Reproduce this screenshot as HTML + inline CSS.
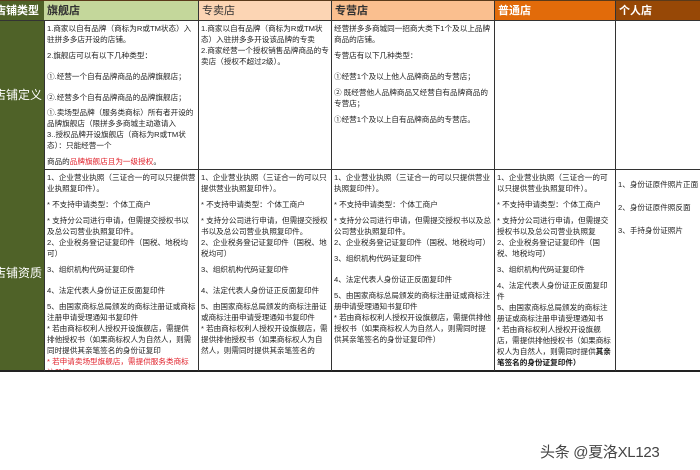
<!DOCTYPE html>
<html><head><meta charset="utf-8">
<style>
*{margin:0;padding:0;box-sizing:border-box}
body{width:700px;height:470px;background:#fff;position:relative;overflow:hidden;font-family:"Liberation Sans","Noto Sans CJK SC",sans-serif;color:#333}
.c{position:absolute;overflow:hidden}
.h{top:0;height:21px;font-size:11px;line-height:21px;padding-left:3px;border-top:1px solid #5a3a1a;border-bottom:1px solid #333}
.t{font-size:7.6px;line-height:11px;padding:2px 2px 0 2px;color:#222}
.t p{margin-bottom:5px}
.v{border-left:1px solid #333}
.red{color:#e0202a}
.b{font-weight:bold;color:#111}
</style></head><body>
<div class="c h" style="left:-8px;width:52px;background:#4f6228;color:#fff;font-weight:bold">店铺类型</div>
<div class="c h" style="left:44px;width:155px;background:#c4d79b;color:#333;font-weight:bold">旗舰店</div>
<div class="c h v" style="left:198px;width:134px;background:#fcd5b4;color:#333">专卖店</div>
<div class="c h v" style="left:331px;width:164px;background:#fabf8f;color:#333;font-weight:bold">专营店</div>
<div class="c h v" style="left:494px;width:122px;background:#e26b0a;color:#fff;font-weight:bold">普通店</div>
<div class="c h v" style="left:615px;width:85px;background:#974806;color:#fff;font-weight:bold">个人店</div>
<div class="c" style="left:0;top:21px;width:44px;height:350px;background:#4f6228"></div>
<div class="c" style="left:-6px;top:88px;width:60px;font-size:12px;color:#fff;line-height:14px">店铺定义</div>
<div class="c" style="left:-6px;top:266px;width:60px;font-size:12px;color:#fff;line-height:14px">店铺资质</div>
<div class="c" style="left:44px;top:169px;width:656px;height:1px;background:#333"></div>
<div class="c" style="left:0;top:370px;width:700px;height:2px;background:#222"></div>
<div class="c" style="left:44px;top:21px;width:1px;height:350px;background:#333"></div>
<div class="c" style="left:198px;top:21px;width:1px;height:350px;background:#333"></div>
<div class="c" style="left:331px;top:21px;width:1px;height:350px;background:#333"></div>
<div class="c" style="left:494px;top:21px;width:1px;height:350px;background:#333"></div>
<div class="c" style="left:615px;top:21px;width:1px;height:350px;background:#333"></div>

<div class="c t" style="left:45px;top:21px;width:153px;height:148px">
<p>1.商家以自有品牌（商标为R或TM状态）入驻拼多多店开设的店铺。</p>
<p>2.旗舰店可以有以下几种类型：</p>
<p style="margin-top:10px;margin-bottom:10px">①.经营一个自有品牌商品的品牌旗舰店；</p>
<p style="margin-bottom:4px">②.经营多个自有品牌商品的品牌旗舰店；</p>
<p style="margin-bottom:0">①.卖场型品牌（服务类商标）所有者开设的品牌旗舰店（限拼多多商城主动邀请入</p>
<p>3..授权品牌开设旗舰店（商标为R或TM状态）：只能经营一个</p>
<p>商品的<span class="red">品牌旗舰店且为一级授权</span>。</p>
</div>
<div class="c t" style="left:199px;top:21px;width:132px;height:148px">
<p style="margin-bottom:0">1.商家以自有品牌（商标为R或TM状态）入驻拼多多开设该品牌的专卖</p>
<p>2.商家经营一个授权销售品牌商品的专卖店（授权不超过2级）。</p>
</div>
<div class="c t" style="left:332px;top:21px;width:162px;height:148px">
<p>经营拼多多商城同一招商大类下1个及以上品牌商品的店铺。</p>
<p>专营店有以下几种类型：</p>
<p style="margin-top:10px">①经营1个及以上他人品牌商品的专营店；</p>
<p>② 既经营他人品牌商品又经营自有品牌商品的专营店；</p>
<p>①经营1个及以上自有品牌商品的专营店。</p>
</div>

<div class="c t" style="left:45px;top:170px;width:153px;height:200px">
<p>1、企业营业执照（三证合一的可以只提供营业执照复印件）。</p>
<p>* 不支持申请类型：个体工商户</p>
<p style="margin-bottom:0">* 支持分公司进行申请，但需提交授权书以及总公司营业执照复印件。</p>
<p>2、企业税务登记证复印件（国税、地税均可）</p>
<p style="margin-bottom:10px">3、组织机构代码证复印件</p>
<p style="margin-bottom:5px">4、法定代表人身份证正反面复印件</p>
<p style="margin-bottom:0">5、由国家商标总局颁发的商标注册证或商标注册申请受理通知书复印件</p>
<p style="margin-bottom:0">* 若由商标权利人授权开设旗舰店，需提供排他授权书（如果商标权人为自然人，则需同时提供其亲笔签名的身份证复印</p>
<p class="red">* 若申请卖场型旗舰店，需提供服务类商标注册证</p>
</div>
<div class="c t" style="left:199px;top:170px;width:132px;height:200px">
<p>1、企业营业执照（三证合一的可以只提供营业执照复印件）。</p>
<p>* 不支持申请类型：个体工商户</p>
<p style="margin-bottom:0">* 支持分公司进行申请，但需提交授权书以及总公司营业执照复印件。</p>
<p>2、企业税务登记证复印件（国税、地税均可）</p>
<p style="margin-bottom:10px">3、组织机构代码证复印件</p>
<p style="margin-bottom:5px">4、法定代表人身份证正反面复印件</p>
<p style="margin-bottom:0">5、由国家商标总局颁发的商标注册证或商标注册申请受理通知书复印件</p>
<p>* 若由商标权利人授权开设旗舰店，需提供排他授权书（如果商标权人为自然人，则需同时提供其亲笔签名的</p>
</div>
<div class="c t" style="left:332px;top:170px;width:162px;height:200px">
<p>1、企业营业执照（三证合一的可以只提供营业执照复印件）。</p>
<p>* 不支持申请类型：个体工商户</p>
<p style="margin-bottom:0">* 支持分公司进行申请，但需提交授权书以及总公司营业执照复印件。</p>
<p>2、企业税务登记证复印件（国税、地税均可）</p>
<p style="margin-bottom:10px">3、组织机构代码证复印件</p>
<p style="margin-bottom:5px">4、法定代表人身份证正反面复印件</p>
<p style="margin-bottom:0">5、由国家商标总局颁发的商标注册证或商标注册申请受理通知书复印件</p>
<p>* 若由商标权利人授权开设旗舰店，需提供排他授权书（如果商标权人为自然人，则需同时提供其亲笔签名的身份证复印件）</p>
</div>
<div class="c t" style="left:495px;top:170px;width:120px;height:200px">
<p>1、企业营业执照（三证合一的可以只提供营业执照复印件）。</p>
<p>* 不支持申请类型：个体工商户</p>
<p style="margin-bottom:0">* 支持分公司进行申请，但需提交授权书以及总公司营业执照复</p>
<p>2、企业税务登记证复印件（国税、地税均可）</p>
<p>3、组织机构代码证复印件</p>
<p style="margin-bottom:0">4、法定代表人身份证正反面复印件</p>
<p style="margin-bottom:0">5、由国家商标总局颁发的商标注册证或商标注册申请受理通知书</p>
<p>* 若由商标权利人授权开设旗舰店，需提供排他授权书（如果商标权人为自然人，则需同时提供<span class="b">其亲笔签名的身份证复印件）</span></p>
</div>
<div class="c t" style="left:616px;top:170px;width:84px;height:200px;padding-top:9px;white-space:nowrap">
<p style="margin-bottom:12px">1、身份证原件照片正面</p>
<p style="margin-bottom:12px">2、身份证原件照反面</p>
<p>3、手持身份证照片</p>
</div>

<div class="c" style="left:540px;top:441px;font-size:15px;color:#444;letter-spacing:-0.3px">头条 @夏洛XL123</div>
</body></html>
